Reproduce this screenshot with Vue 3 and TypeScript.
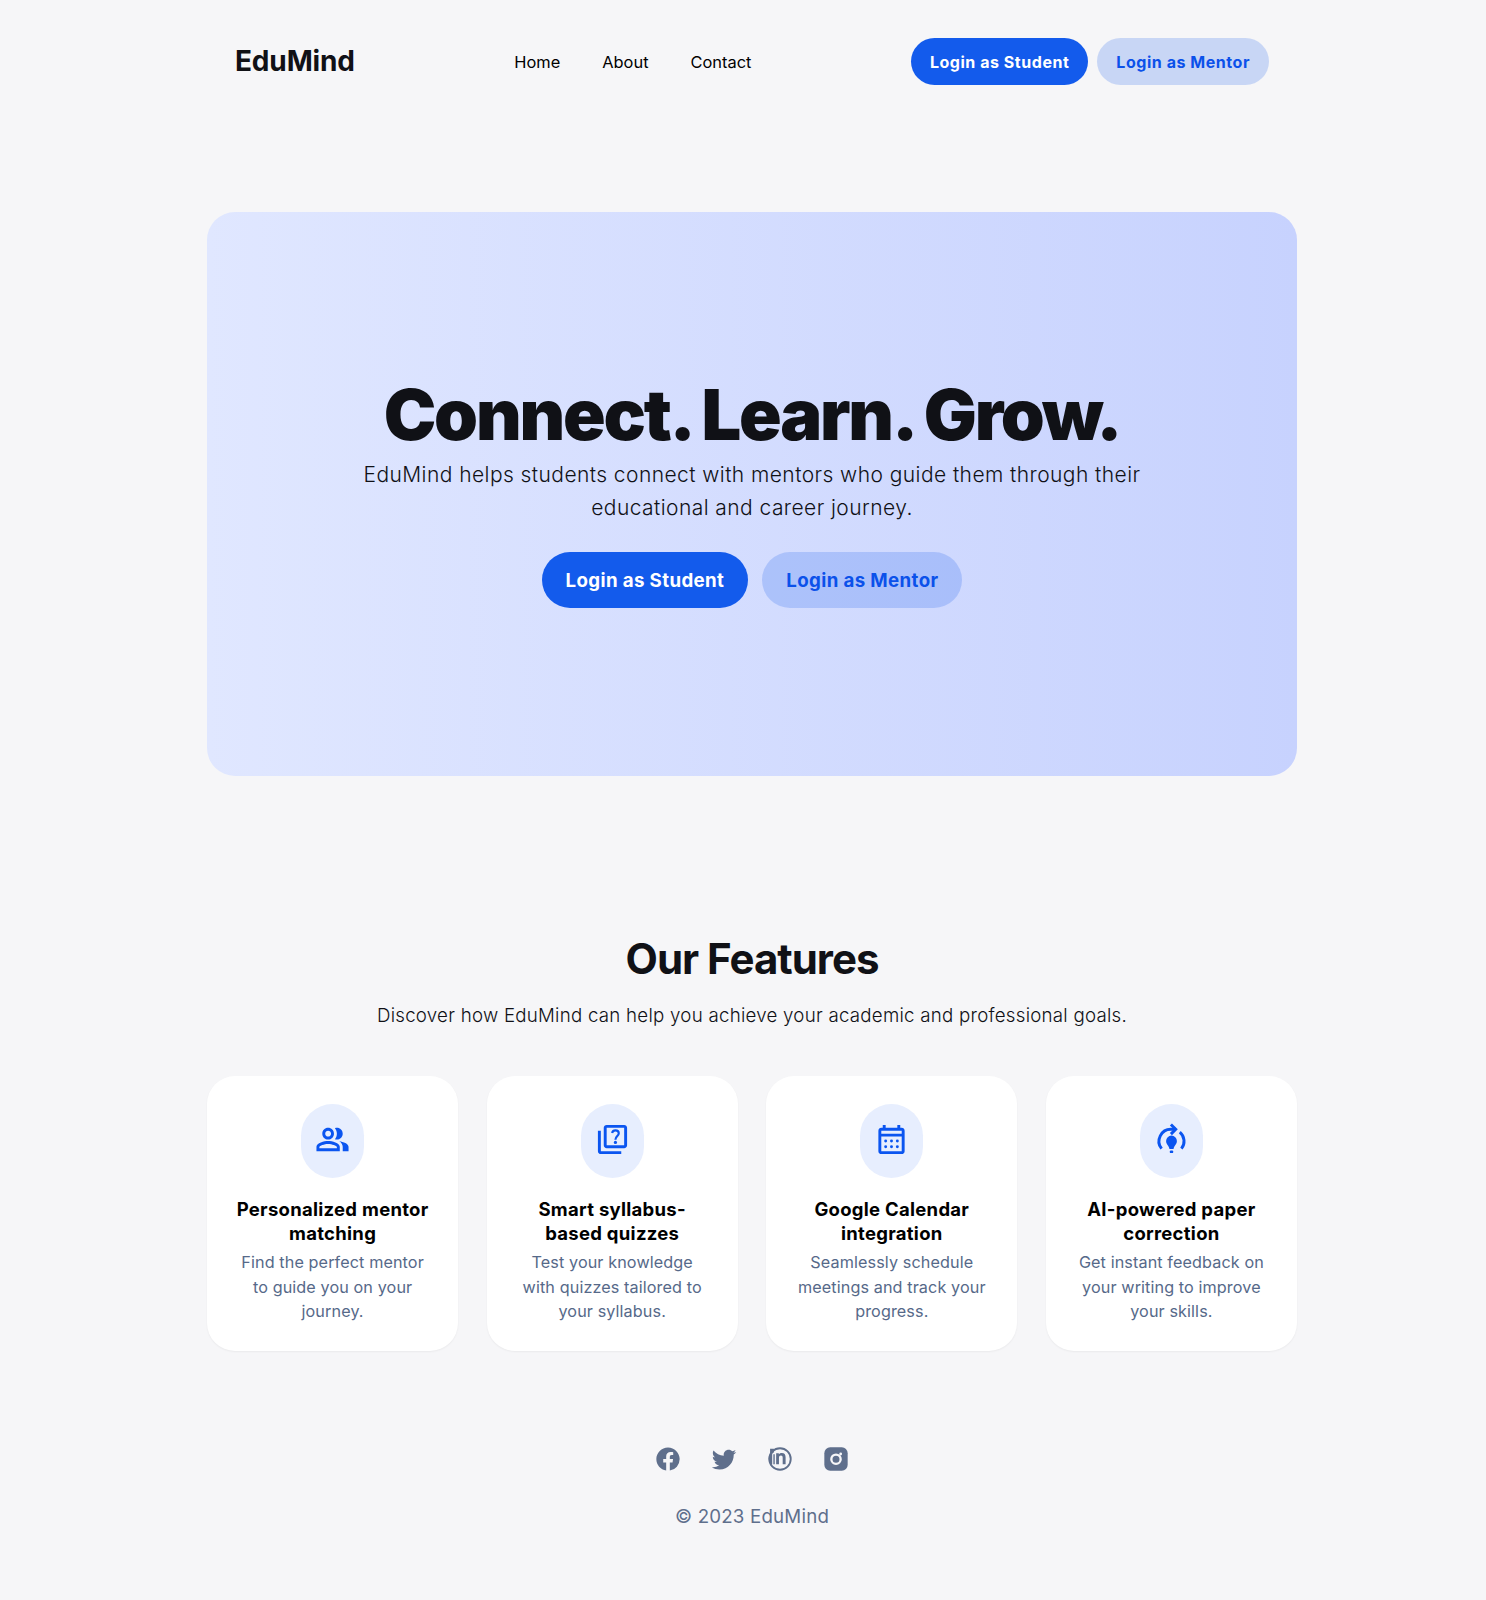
<script setup lang="ts">
interface Feature {
  title: string[]
  text: string[]
  icon: 'group' | 'quiz' | 'calendar' | 'ai'
}
const nav: string[] = ['Home', 'About', 'Contact']
const features: Feature[] = [
  { icon: 'group', title: ['Personalized mentor', 'matching'], text: ['Find the perfect mentor', 'to guide you on your', 'journey.'] },
  { icon: 'quiz', title: ['Smart syllabus-', 'based quizzes'], text: ['Test your knowledge', 'with quizzes tailored to', 'your syllabus.'] },
  { icon: 'calendar', title: ['Google Calendar', 'integration'], text: ['Seamlessly schedule', 'meetings and track your', 'progress.'] },
  { icon: 'ai', title: ['AI-powered paper', 'correction'], text: ['Get instant feedback on', 'your writing to improve', 'your skills.'] },
]
</script>

<template>
  <div class="page">
    <header class="header">
      <div class="brand">EduMind</div>
      <nav class="nav"><a v-for="n in nav" :key="n">{{ n }}</a></nav>
      <div class="actions">
        <button class="btn primary">Login as Student</button>
        <button class="btn soft">Login as Mentor</button>
      </div>
    </header>

    <section class="hero">
      <h1>Connect. Learn. Grow.</h1>
      <p>EduMind helps students connect with mentors who guide them through their<br />educational and career journey.</p>
      <div class="hero-actions">
        <button class="btn big primary">Login as Student</button>
        <button class="btn big soft">Login as Mentor</button>
      </div>
    </section>

    <section class="features">
      <h2>Our Features</h2>
      <p class="lead">Discover how EduMind can help you achieve your academic and professional goals.</p>
      <div class="grid">
        <article v-for="f in features" :key="f.icon" class="card">
          <div class="badge">
            <svg v-if="f.icon === 'group'" viewBox="0 0 24 24"><path d="M16.67 13.13C18.04 14.06 19 15.32 19 17v3h4v-3c0-2.18-3.57-3.47-6.33-3.87zM15 12c2.21 0 4-1.79 4-4s-1.79-4-4-4c-.47 0-.91.1-1.33.24C14.5 5.27 15 6.58 15 8s-.5 2.73-1.33 3.76c.42.14.86.24 1.33.24zM9 12c2.21 0 4-1.79 4-4s-1.79-4-4-4-4 1.79-4 4 1.79 4 4 4zm0-6c1.1 0 2 .9 2 2s-.9 2-2 2-2-.9-2-2 .9-2 2-2zm0 7c-2.67 0-8 1.34-8 4v3h16v-3c0-2.66-5.33-4-8-4zm6 5H3v-.99C3.2 16.29 6.3 15 9 15s5.8 1.29 6 2v1z" /></svg>
            <svg v-else-if="f.icon === 'quiz'" viewBox="0 0 24 24"><path d="M4 6H2v14c0 1.1.9 2 2 2h14v-2H4V6zm16-4H8c-1.1 0-2 .9-2 2v12c0 1.1.9 2 2 2h12c1.1 0 2-.9 2-2V4c0-1.1-.9-2-2-2zm0 14H8V4h12v12z" /><path d="M11.700 7.500C12 6.300 12.900 5.700 14 5.700c1.400 0 2.300.8 2.300 2 0 1.900-2.300 2-2.300 4.500" fill="none" stroke="currentColor" stroke-width="1.500" /><circle cx="14" cy="14" r="1.100" /></svg>
            <svg v-else-if="f.icon === 'calendar'" viewBox="0 0 24 24"><path d="M19 4h-1V2h-2v2H8V2H6v2H5c-1.110 0-1.990.9-1.990 2L3 20c0 1.100.890 2 2 2h14c1.100 0 2-.9 2-2V6c0-1.100-.9-2-2-2zm0 16H5V10h14v10zm0-12H5V6h14v2z" /><circle v-for="i in 6" :key="i" :cx="8 + ((i - 1) % 3) * 4" :cy="i > 3 ? 17 : 13" r="1" /></svg>
            <svg v-else viewBox="0 0 24 24"><g fill="none" stroke="currentColor" stroke-width="2"><path d="M5.200 18.300A8.200 8.200 0 0 1 12 5h3" /><path d="M11.600 1.700 14.900 5l-3.300 3.300M17.700 6.900a8.200 8.200 0 0 1 1.100 11.400" /></g><path d="M12 9.300a3.700 3.700 0 0 0-3.700 3.700c0 2.300 1.900 3 2.300 5.500h2.800c.4-2.500 2.300-3.200 2.300-5.500A3.700 3.700 0 0 0 12 9.300z" /><rect x="10.800" y="19.500" width="2.400" height="1.800" rx=".8" /></svg>
          </div>
          <h3><template v-for="(l, i) in f.title" :key="l"><br v-if="i" />{{ l }}</template></h3>
          <p><template v-for="(l, i) in f.text" :key="l"><br v-if="i" />{{ l }}</template></p>
        </article>
      </div>
    </section>

    <footer class="footer">
      <div class="social">
        <svg viewBox="0 0 24 24"><path d="M12 2.040C6.500 2.040 2 6.530 2 12.060c0 5 3.660 9.150 8.440 9.900v-7H7.900v-2.900h2.540V9.850c0-2.510 1.490-3.890 3.780-3.890 1.090 0 2.230.19 2.230.19v2.470h-1.260c-1.240 0-1.630.77-1.630 1.560v1.880h2.780l-.45 2.900h-2.330v7A10 10 0 0 0 22 12.060c0-5.530-4.500-10.020-10-10.020z" /></svg>
        <svg viewBox="0 0 24 24"><path d="M22.460 6c-.770.350-1.600.580-2.460.690.880-.530 1.560-1.370 1.880-2.380-.830.500-1.750.850-2.720 1.050C18.370 4.500 17.260 4 16 4c-2.350 0-4.270 1.920-4.270 4.290 0 .340.040.670.110.980C8.280 9.090 5.110 7.380 3 4.790c-.370.630-.580 1.370-.580 2.150 0 1.490.750 2.810 1.910 3.560-.710 0-1.370-.200-1.950-.500v.030c0 2.080 1.480 3.820 3.440 4.210a4.220 4.220 0 0 1-1.930.07 4.280 4.280 0 0 0 4 2.980 8.521 8.521 0 0 1-5.330 1.840c-.340 0-.680-.020-1.020-.060C3.440 20.290 5.700 21 8.120 21 16 21 20.330 14.460 20.330 8.790c0-.190 0-.370-.010-.560.840-.600 1.560-1.360 2.140-2.230z" /></svg>
        <svg viewBox="0 0 24 24"><circle cx="12" cy="12" r="9.200" fill="none" stroke="currentColor" stroke-width="1.600" /><path d="M3.500 3.300h3.300v2.900L5.300 7.500v9H4L2.300 12 3.500 8zM6.300 8h1.200v8.500H6.300zM8.700 7h2.300v1c.7-.8 1.500-1.200 2.600-1.200 2.200 0 3.200 1.300 3.200 3.700v6h-2.500v-5.600c0-1.300-.5-1.900-1.500-1.900-1.100 0-1.700.7-1.700 2.100v5.400H8.700z" /></svg>
        <svg viewBox="0 0 24 24"><rect x="2" y="2" width="20" height="20" rx="5" /><circle cx="12" cy="12.200" r="4" fill="none" stroke="#f6f6f8" stroke-width="2" /><circle cx="16" cy="7.700" r="1.200" fill="#f6f6f8" /></svg>
      </div>
      <p>© 2023 EduMind</p>
    </footer>
  </div>
</template>

<style>
body { margin: 0; background: #f6f6f8; }
</style>
<style scoped>
.page { box-sizing: border-box; width: 100%; min-height: 1600px; padding: 0 189px 0 207px; background: #f6f6f8; font-family: Inter, sans-serif; color: #101116; }
.header { box-sizing: border-box; height: 122px; padding: 0 28px; display: flex; align-items: center; justify-content: space-between; }
.brand { font-size: 28px; font-weight: 700; letter-spacing: -.15px; }
.nav { display: flex; gap: 42px; padding-top: 2px; font-size: 16.400px; font-weight: 400; color: #000; }
.actions { display: flex; gap: 9px; }
.btn { border: 0; height: 47px; border-radius: 28px; padding: 2px 19px 0; font: 700 16px Inter, sans-serif; letter-spacing: .54px; white-space: nowrap; }
.primary { background: #135bec; color: #fff; }
.soft { background: rgba(19, 91, 236, .2); color: #0b51ea; }
.big { height: 56px; padding: 1px 24px 0; font-size: 18.700px; letter-spacing: .37px; }
.hero { box-sizing: border-box; height: 564px; margin-top: 89.500px; border-radius: 28px; background: linear-gradient(90deg, #e0e7ff, #c7d2fe); display: flex; flex-direction: column; align-items: center; justify-content: center; text-align: center; }
h1 { margin: 0; font-size: 70.400px; line-height: 70px; font-weight: 900; letter-spacing: -2.200px; }
.hero p { margin: 8px 0 28px; font-size: 21px; line-height: 33px; font-weight: 300; letter-spacing: .43px; }
.hero-actions { display: flex; gap: 14px; }
.features { margin-top: 155.500px; text-align: center; }
h2 { margin: 0; font-size: 42px; line-height: 56px; font-weight: 700; letter-spacing: -1px; }
.lead { margin: 15px 0 46px; font-size: 18.700px; line-height: 28px; font-weight: 300; letter-spacing: .25px; }
.grid { display: grid; grid-template-columns: repeat(4, 1fr); gap: 28.400px; }
.card { box-sizing: border-box; height: 275px; padding-top: 28px; background: #fff; border-radius: 28px; box-shadow: 0 1px 2px rgba(0, 0, 0, .05); display: flex; flex-direction: column; align-items: center; }
.badge { box-sizing: border-box; width: 63px; height: 74px; padding-bottom: 3px; border-radius: 32px; background: #e7eefe; color: #0b55f0; display: flex; align-items: center; justify-content: center; }
.badge svg { width: 35px; height: 35px; fill: currentColor; }
h3 { margin: 20px 0 5px; font-size: 18.500px; line-height: 23.500px; font-weight: 700; letter-spacing: .28px; color: #000; }
.card p { margin: 0; font-size: 16.200px; line-height: 24.600px; letter-spacing: .1px; color: #566989; }
.footer { margin-top: 94px; text-align: center; color: #5f6f8c; }
.social { display: flex; justify-content: center; gap: 28px; }
.social svg { width: 28px; height: 28px; fill: currentColor; }
.footer p { margin: 29.500px 0 0; font-size: 18.700px; line-height: 28px; letter-spacing: .2px; }
</style>
